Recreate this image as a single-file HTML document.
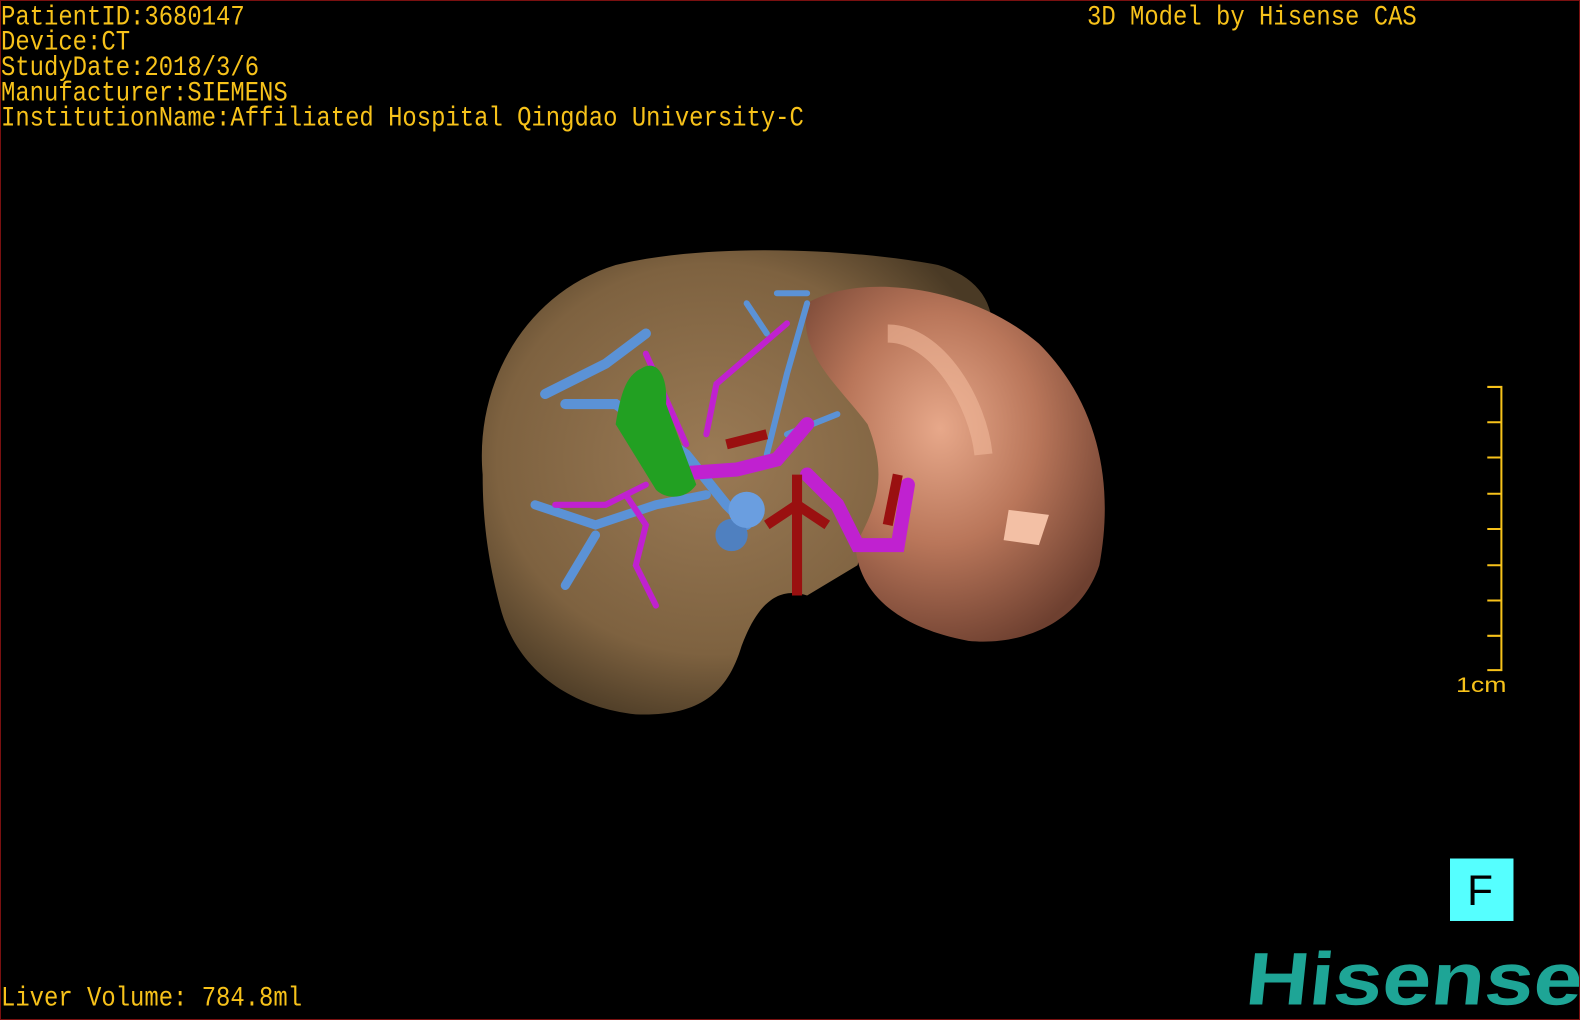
<!DOCTYPE html>
<html><head><meta charset="utf-8">
<style>
html,body{margin:0;padding:0;background:#000;}
#f{position:relative;width:1580px;height:1020px;background:#000;overflow:hidden;box-sizing:border-box;border:1px solid #7a1010;}
.t{position:absolute;font-family:"Liberation Mono",monospace;font-size:23.9px;color:#f7c21a;white-space:pre;line-height:21.9px;transform:scaleY(1.15);transform-origin:0 0;}
</style></head><body><div id="f">
<div class="t" style="left:0;top:5px">PatientID:3680147
Device:CT
StudyDate:2018/3/6
Manufacturer:SIEMENS
InstitutionName:Affiliated Hospital Qingdao University-C</div>
<div class="t" style="left:1086px;top:5px">3D Model by Hisense CAS</div>
<div class="t" style="left:0;top:986px">Liver Volume: 784.8ml</div>

<svg width="1580" height="1020" style="position:absolute;left:0;top:0">
<defs>
<radialGradient id="lv" cx="0.45" cy="0.45" r="0.6">
<stop offset="0" stop-color="#9a7a55"/><stop offset="0.7" stop-color="#7e6240"/><stop offset="1" stop-color="#4a3a25"/></radialGradient>
<radialGradient id="sp" cx="0.45" cy="0.4" r="0.65">
<stop offset="0" stop-color="#e7a88a"/><stop offset="0.5" stop-color="#b9765a"/><stop offset="1" stop-color="#6e4030"/></radialGradient>
</defs>
<g transform="scale(1.00765)">
<path d="M478,470 C470,380 520,290 610,262 C700,240 840,245 930,262 C990,280 1000,330 960,400 C900,470 860,520 850,560 L800,590 C770,580 750,600 735,640 C720,690 690,710 630,708 C560,700 510,660 495,600 C482,550 478,510 478,470 Z" fill="url(#lv)"/>
<path d="M800,300 C850,270 960,280 1030,340 C1090,400 1105,480 1090,560 C1070,620 1010,640 960,635 C880,620 850,580 848,540 C870,500 880,470 860,420 C830,380 790,350 800,300 Z" fill="url(#sp)"/>
<path d="M880,330 C930,330 970,400 975,450" stroke="#f0b89a" stroke-width="18" fill="none" opacity=".6"/>
<path d="M1000,505 L1040,510 L1030,540 L995,535 Z" fill="#f3c0a5"/>
<g stroke="#5b92d6" fill="none" stroke-linecap="round">
<path d="M540,390 L600,360 L640,330 M560,400 L610,400 L680,450 L720,500 L740,520" stroke-width="10"/>
<path d="M530,500 L590,520 L650,500 L700,490 M560,580 L590,530" stroke-width="9"/>
<path d="M760,450 L780,370 L800,300 M740,300 L760,330 M770,290 L800,290 M780,430 L830,410" stroke-width="6"/>
</g>
<circle cx="725" cy="530" r="16" fill="#4f80c0"/><circle cx="740" cy="505" r="18" fill="#6a9ee0"/>
<g stroke="#c021d0" fill="none" stroke-linecap="round">
<path d="M660,470 L730,465 L770,455 L800,420" stroke-width="14"/>
<path d="M800,470 L830,500 L850,540 L890,540 L900,480" stroke-width="14"/>
<path d="M640,480 L600,500 L550,500 M620,490 L640,520 L630,560 L650,600 M700,430 L710,380 L780,320 M680,440 L640,350" stroke-width="6"/>
</g>
<path d="M790,470 L790,590 M760,520 L790,500 L820,520 M720,440 L760,430 M890,470 L880,520" stroke="#9a1010" stroke-width="10" fill="none"/>
<path d="M635,365 C650,355 662,370 660,400 L690,480 C680,495 660,495 650,485 L610,420 C615,390 620,372 635,365 Z" fill="#22a022"/>
<path d="M1475,383 H1489 V664 H1475 M1475,418 H1489 M1475,453 H1489 M1475,489 H1489 M1475,524 H1489 M1475,560 H1489 M1475,595 H1489 M1475,630 H1489" stroke="#f7c21a" stroke-width="2" fill="none"/>
<text x="1444" y="686" font-family="Liberation Sans,sans-serif" font-size="21" fill="#f7c21a" textLength="50" lengthAdjust="spacingAndGlyphs">1cm</text>
<rect x="1438" y="851" width="63" height="62" fill="#55ffff"/>
<text x="1455" y="897" font-family="Liberation Sans,sans-serif" font-size="42" fill="#000">F</text>
<text x="1234" y="996" font-family="Liberation Sans,sans-serif" font-weight="bold" font-size="74" fill="#1ea596" textLength="334" lengthAdjust="spacingAndGlyphs" transform="skewX(-6) translate(104,0)">Hisense</text>
</g>
</svg>
</div></body></html>
